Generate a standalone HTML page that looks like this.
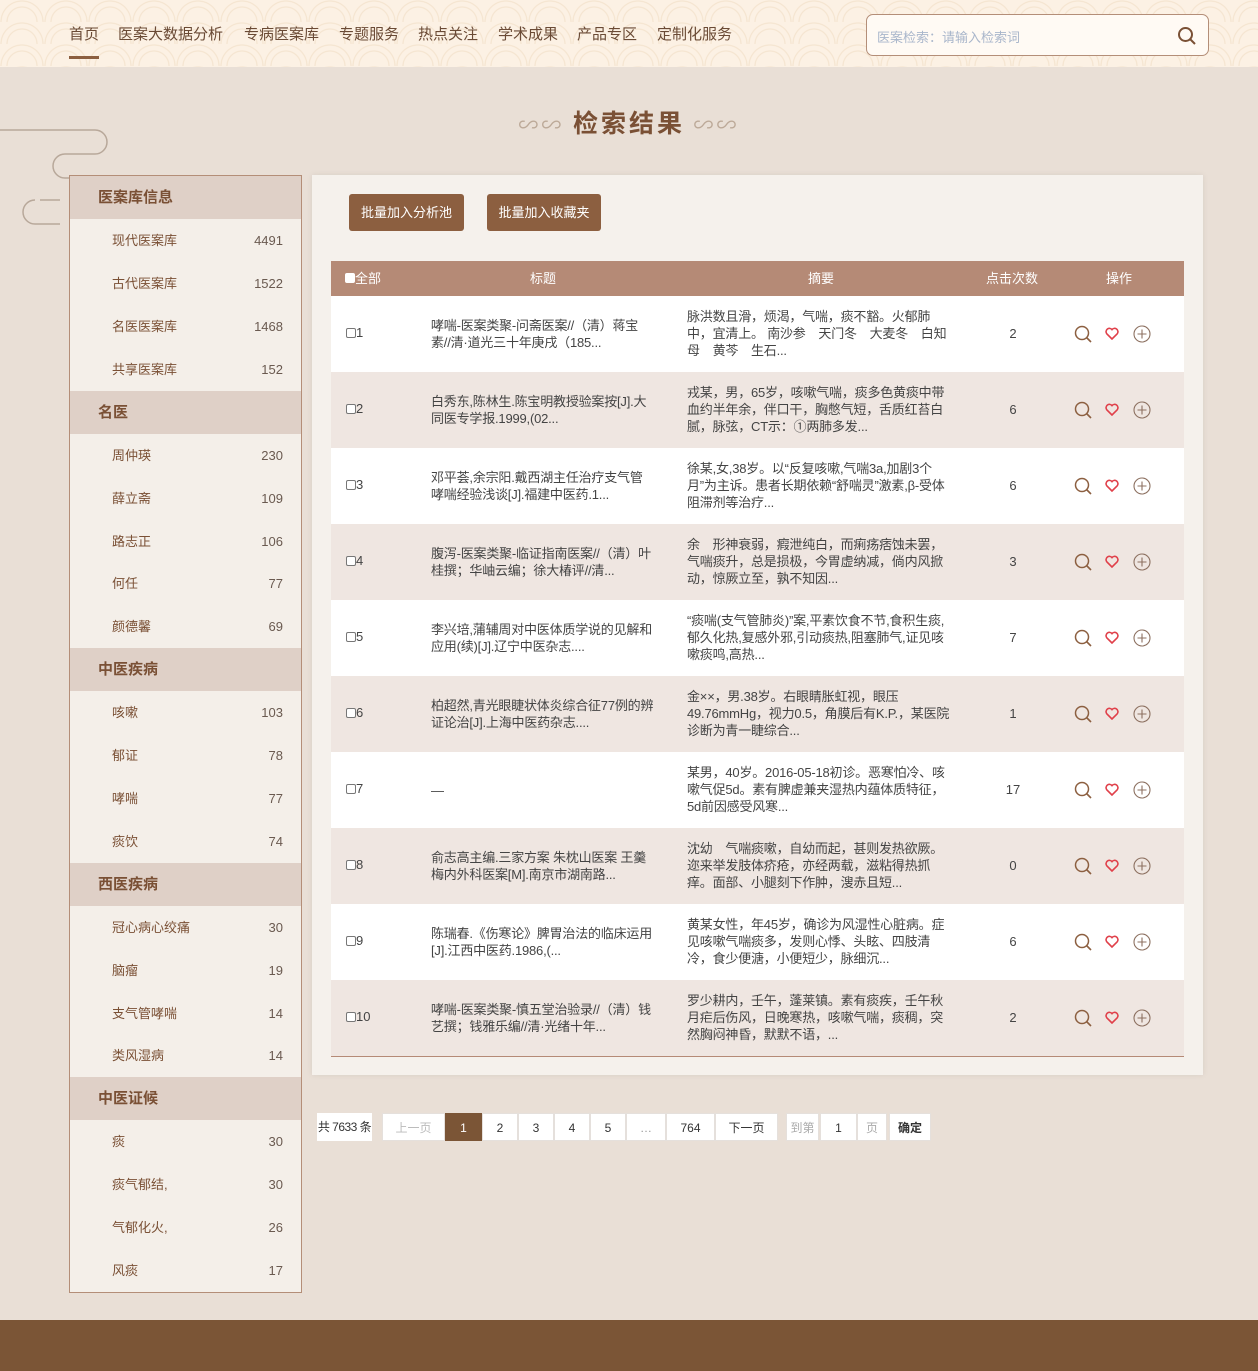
<!DOCTYPE html>
<html><head><meta charset="utf-8"><style>
*{margin:0;padding:0;box-sizing:border-box}
body{width:1258px;height:1371px;position:relative;overflow:hidden;background:#e9dfd6;font-family:"Liberation Sans","Noto Sans CJK SC",sans-serif;font-size:13px;color:#5a4a40}
.hdr{position:absolute;left:0;top:0;width:1258px;height:67px;background:#fcf1e4;
background-image:radial-gradient(circle at 50% 100%,transparent 14px,#f3e2cc 15px,transparent 16px,transparent 20px,#f3e2cc 21px,transparent 22px);background-size:44px 22px}
.nav{position:absolute;top:23px;font-size:15px;color:#6a4a35}
.nav span{position:absolute;white-space:nowrap}
.ul{position:absolute;left:69px;top:56px;width:30px;height:3px;background:#8c5f40}
.search{position:absolute;left:866px;top:14px;width:343px;height:42px;border:1px solid #b48e78;border-radius:7px;background:#fffaf4}
.search span{position:absolute;left:10px;top:12px;font-size:13px;color:#a9b6cb}
.title{position:absolute;left:0;width:1258px;top:104px;text-align:center;font-size:25px;font-weight:bold;color:#7a5035;letter-spacing:3px}
.side{position:absolute;left:69px;top:175px;width:233px;height:1118px;border:1px solid #b48e78;background:#f4efe9}
.sh,.si{position:absolute;left:0;width:231px;height:43px;line-height:43px}
.sh{background:#dfd0c7;padding-left:28px;font-size:15px;font-weight:bold;color:#7a5035}
.si{padding-left:42px;font-size:13px;color:#7a5035}
.si b{position:absolute;right:18px;font-weight:normal;color:#6a5a50}
.main{position:absolute;left:312px;top:175px;width:891px;height:900px;background:#f5f1ec;box-shadow:0 0 6px rgba(0,0,0,.08)}
.btn{position:absolute;top:194px;height:37px;line-height:37px;background:#8c5f40;color:#fff;font-size:13px;text-align:center;border-radius:3px}
.th{position:absolute;left:331px;top:261px;width:853px;height:35px;background:#b58a76;color:#fff;font-size:13px;line-height:35px}
.th > span{position:absolute;white-space:nowrap}
.row{position:absolute;left:331px;width:853px;height:76px;font-size:13px;color:#444}
.row .c,.row .t,.row .s,.row .n{position:absolute}
.row .c{left:15px;top:29px}
.row .t{left:100px;top:21px;width:224px;line-height:17px;letter-spacing:-0.2px}
.row .s{left:356px;top:12px;width:268px;line-height:17px;letter-spacing:-0.2px}
.row .n{left:670px;width:24px;text-align:center;top:30px}
.row svg{position:absolute;top:29px}
.cb{display:inline-block;width:10px;height:10px;border:1px solid #777;border-radius:2px;background:#fff;vertical-align:-1px}
.pg{position:absolute;top:1113px;height:28px;line-height:28px;background:#fff;text-align:center;font-size:12px;color:#333;border:1px solid #e5e0dc;white-space:nowrap}
.foot{position:absolute;left:0;top:1320px;width:1258px;height:51px;background:#7b5536}
</style></head><body>
<div class="hdr"></div>
<div class="nav">
<span style="left:69px">首页</span><span style="left:118px">医案大数据分析</span><span style="left:244px">专病医案库</span><span style="left:339px">专题服务</span><span style="left:418px">热点关注</span><span style="left:498px">学术成果</span><span style="left:577px">产品专区</span><span style="left:657px">定制化服务</span>
</div>
<div class="ul"></div>
<div class="search"><span>医案检索：请输入检索词</span>
<svg style="position:absolute;left:310px;top:11px" width="20" height="20" viewBox="0 0 20 20"><circle cx="8.5" cy="8.5" r="6.5" fill="none" stroke="#7a5035" stroke-width="2"/><line x1="13.5" y1="13.5" x2="18" y2="18" stroke="#7a5035" stroke-width="2"/></svg></div>
<svg style="position:absolute;left:0;top:125px" width="110" height="110" viewBox="0 0 110 110" fill="none" stroke="#b8a89a" stroke-width="1.5"><path d="M0 5 H95 a12 12 0 0 1 0 24 H65 a12 12 0 0 0 0 24 H75"/><path d="M40 75 H60 M35 75 a12 12 0 0 0 0 24 H60"/></svg>
<div class="title"><span style="color:#bca998;font-weight:normal;font-size:20px">∽∽ </span>检索结果<span style="color:#bca998;font-weight:normal;font-size:20px"> ∽∽</span></div>

<div class="side">
<div class="sh" style="top:0">医案库信息</div>
<div class="si" style="top:43px">现代医案库<b>4491</b></div>
<div class="si" style="top:86px">古代医案库<b>1522</b></div>
<div class="si" style="top:129px">名医医案库<b>1468</b></div>
<div class="si" style="top:172px">共享医案库<b>152</b></div>
<div class="sh" style="top:215px">名医</div>
<div class="si" style="top:258px">周仲瑛<b>230</b></div>
<div class="si" style="top:301px">薛立斋<b>109</b></div>
<div class="si" style="top:344px">路志正<b>106</b></div>
<div class="si" style="top:386px">何任<b>77</b></div>
<div class="si" style="top:429px">颜德馨<b>69</b></div>
<div class="sh" style="top:472px">中医疾病</div>
<div class="si" style="top:515px">咳嗽<b>103</b></div>
<div class="si" style="top:558px">郁证<b>78</b></div>
<div class="si" style="top:601px">哮喘<b>77</b></div>
<div class="si" style="top:644px">痰饮<b>74</b></div>
<div class="sh" style="top:687px">西医疾病</div>
<div class="si" style="top:730px">冠心病心绞痛<b>30</b></div>
<div class="si" style="top:773px">脑瘤<b>19</b></div>
<div class="si" style="top:816px">支气管哮喘<b>14</b></div>
<div class="si" style="top:858px">类风湿病<b>14</b></div>
<div class="sh" style="top:901px">中医证候</div>
<div class="si" style="top:944px">痰<b>30</b></div>
<div class="si" style="top:987px">痰气郁结,<b>30</b></div>
<div class="si" style="top:1030px">气郁化火,<b>26</b></div>
<div class="si" style="top:1073px">风痰<b>17</b></div>
</div>

<div class="main"></div>
<div class="btn" style="left:349px;width:115px">批量加入分析池</div>
<div class="btn" style="left:487px;width:114px">批量加入收藏夹</div>
<div class="th"><span style="left:14px"><i class="cb" style="border-color:#fff;vertical-align:0;font-style:normal"></i>全部</span><span style="left:199px">标题</span><span style="left:477px">摘要</span><span style="left:655px">点击次数</span><span style="left:775px">操作</span></div>

<div id="rows"></div>
<div style="position:absolute;left:331px;top:1056px;width:853px;height:1px;background:#b58a76"></div>

<div class="pg" style="left:317px;width:55px;border:none;letter-spacing:-0.5px">共 7633 条</div>
<div class="pg" style="left:382px;width:63px;color:#bbb">上一页</div>
<div class="pg" style="left:445px;width:37px;background:#7b5536;color:#fff;border-color:#7b5536">1</div>
<div class="pg" style="left:482px;width:36px">2</div>
<div class="pg" style="left:518px;width:36px">3</div>
<div class="pg" style="left:554px;width:36px">4</div>
<div class="pg" style="left:590px;width:36px">5</div>
<div class="pg" style="left:626px;width:40px;color:#999">…</div>
<div class="pg" style="left:666px;width:49px">764</div>
<div class="pg" style="left:715px;width:63px">下一页</div>
<div class="pg" style="left:786px;width:33px;color:#aaa">到第</div>
<div class="pg" style="left:820px;width:37px">1</div>
<div class="pg" style="left:857px;width:30px;color:#aaa">页</div>
<div class="pg" style="left:889px;width:42px;font-weight:bold">确定</div>

<div class="foot"></div>
<script>
var d=[["哮喘-医案类聚-问斋医案//（清）蒋宝素//清·道光三十年庚戌（185...","脉洪数且滑，烦渴，气喘，痰不豁。火郁肺中，宜清上。 南沙参　天门冬　大麦冬　白知母　黄芩　生石...",2],
["白秀东,陈林生.陈宝明教授验案按[J].大同医专学报.1999,(02...","戎某，男，65岁，咳嗽气喘，痰多色黄痰中带血约半年余，伴口干，胸憋气短，舌质红苔白腻，脉弦，CT示：①两肺多发...",6],
["邓平荟,余宗阳.戴西湖主任治疗支气管哮喘经验浅谈[J].福建中医药.1...","徐某,女,38岁。以“反复咳嗽,气喘3a,加剧3个月”为主诉。患者长期依赖“舒喘灵”激素,β-受体阻滞剂等治疗...",6],
["腹泻-医案类聚-临证指南医案//（清）叶桂撰；华岫云编；徐大椿评//清...","余　形神衰弱，瘕泄纯白，而痢疡痞蚀未罢，气喘痰升，总是损极，今胃虚纳减，倘内风掀动，惊厥立至，孰不知因...",3],
["李兴培,蒲辅周对中医体质学说的见解和应用(续)[J].辽宁中医杂志....","“痰喘(支气管肺炎)”案,平素饮食不节,食积生痰,郁久化热,复感外邪,引动痰热,阻塞肺气,证见咳嗽痰鸣,高热...",7],
["柏超然,青光眼睫状体炎综合征77例的辨证论治[J].上海中医药杂志....","金××，男.38岁。右眼睛胀虹视，眼压49.76mmHg，视力0.5，角膜后有K.P.，某医院诊断为青一睫综合...",1],
["—","某男，40岁。2016-05-18初诊。恶寒怕冷、咳嗽气促5d。素有脾虚兼夹湿热内蕴体质特征，5d前因感受风寒...",17],
["俞志高主编.三家方案 朱枕山医案 王羹梅内外科医案[M].南京市湖南路...","沈幼　气喘痰嗽，自幼而起，甚则发热欲厥。迩来举发肢体疥疮，亦经两载，滋粘得热抓痒。面部、小腿刻下作肿，溲赤且短...",0],
["陈瑞春.《伤寒论》脾胃治法的临床运用[J].江西中医药.1986,(...","黄某女性，年45岁，确诊为风湿性心脏病。症见咳嗽气喘痰多，发则心悸、头眩、四肢清冷，食少便溏，小便短少，脉细沉...",6],
["哮喘-医案类聚-慎五堂治验录//（清）钱艺撰；钱雅乐编//清·光绪十年...","罗少耕内，壬午，蓬莱镇。素有痰疾，壬午秋月疟后伤风，日晚寒热，咳嗽气喘，痰稠，突然胸闷神昏，默默不语，...",2]];
var ic='<svg style="left:743px" width="18" height="18" viewBox="0 0 18 18"><circle cx="8" cy="8" r="6.5" fill="none" stroke="#8c5f40" stroke-width="1.5"/><line x1="12.5" y1="12.5" x2="17" y2="17" stroke="#8c5f40" stroke-width="1.6"/></svg>'+
'<svg style="left:774px;top:31px" width="14" height="13" viewBox="0 0 14 13"><path d="M7 12 L1.8 6.8 A3 3 0 0 1 7 2.6 A3 3 0 0 1 12.2 6.8 Z" fill="none" stroke="#e0404a" stroke-width="1.6"/></svg>'+
'<svg style="left:802px" width="18" height="18" viewBox="0 0 18 18"><circle cx="9" cy="9" r="8" fill="none" stroke="#8c7060" stroke-width="1.1"/><path d="M9 4.5V13.5M4.5 9H13.5" stroke="#8c7060" stroke-width="1.1"/></svg>';
var h='';
for(var i=0;i<10;i++){h+='<div class="row" style="top:'+(296+i*76)+'px;background:'+(i%2?'#efe6e1':'#fff')+'"><span class="c"><span class="cb"></span>'+(i+1)+'</span><div class="t"'+(d[i][0]=='—'?' style="top:30px"':'')+'>'+d[i][0]+'</div><div class="s">'+d[i][1]+'</div><div class="n">'+d[i][2]+'</div>'+ic+'</div>';}
document.getElementById('rows').innerHTML=h;
</script>
</body></html>
